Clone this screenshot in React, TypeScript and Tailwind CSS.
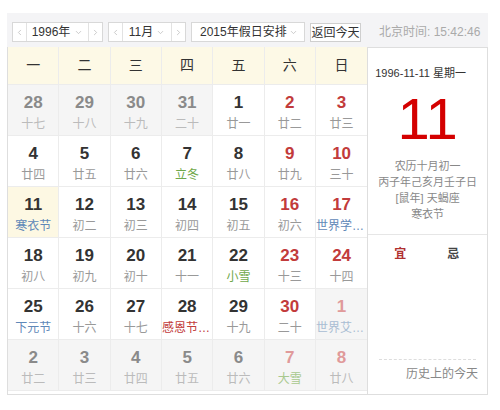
import React from 'react';
import { ChevronDown, ChevronLeft, ChevronRight } from 'lucide-react';

type Kind = 'prev' | 'cur' | 'next';
interface Day {
  d: number;
  l: string;
  kind: Kind;
  tone?: 'blue' | 'green' | 'red';
  today?: boolean;
}

const rows: Day[][] = [
  [
    { d: 28, l: '十七', kind: 'prev' },
    { d: 29, l: '十八', kind: 'prev' },
    { d: 30, l: '十九', kind: 'prev' },
    { d: 31, l: '二十', kind: 'prev' },
    { d: 1, l: '廿一', kind: 'cur' },
    { d: 2, l: '廿二', kind: 'cur' },
    { d: 3, l: '廿三', kind: 'cur' },
  ],
  [
    { d: 4, l: '廿四', kind: 'cur' },
    { d: 5, l: '廿五', kind: 'cur' },
    { d: 6, l: '廿六', kind: 'cur' },
    { d: 7, l: '立冬', kind: 'cur', tone: 'green' },
    { d: 8, l: '廿八', kind: 'cur' },
    { d: 9, l: '廿九', kind: 'cur' },
    { d: 10, l: '三十', kind: 'cur' },
  ],
  [
    { d: 11, l: '寒衣节', kind: 'cur', tone: 'blue', today: true },
    { d: 12, l: '初二', kind: 'cur' },
    { d: 13, l: '初三', kind: 'cur' },
    { d: 14, l: '初四', kind: 'cur' },
    { d: 15, l: '初五', kind: 'cur' },
    { d: 16, l: '初六', kind: 'cur' },
    { d: 17, l: '世界学生日', kind: 'cur', tone: 'blue' },
  ],
  [
    { d: 18, l: '初八', kind: 'cur' },
    { d: 19, l: '初九', kind: 'cur' },
    { d: 20, l: '初十', kind: 'cur' },
    { d: 21, l: '十一', kind: 'cur' },
    { d: 22, l: '小雪', kind: 'cur', tone: 'green' },
    { d: 23, l: '十三', kind: 'cur' },
    { d: 24, l: '十四', kind: 'cur' },
  ],
  [
    { d: 25, l: '下元节', kind: 'cur', tone: 'blue' },
    { d: 26, l: '十六', kind: 'cur' },
    { d: 27, l: '十七', kind: 'cur' },
    { d: 28, l: '感恩节(美国)', kind: 'cur', tone: 'red' },
    { d: 29, l: '十九', kind: 'cur' },
    { d: 30, l: '二十', kind: 'cur' },
    { d: 1, l: '世界艾滋病日', kind: 'next', tone: 'blue' },
  ],
  [
    { d: 2, l: '廿二', kind: 'next' },
    { d: 3, l: '廿三', kind: 'next' },
    { d: 4, l: '廿四', kind: 'next' },
    { d: 5, l: '廿五', kind: 'next' },
    { d: 6, l: '廿六', kind: 'next' },
    { d: 7, l: '大雪', kind: 'next', tone: 'green' },
    { d: 8, l: '廿八', kind: 'next' },
  ],
];

const weekNames = ['一', '二', '三', '四', '五', '六', '日'];

const DayCell: React.FC<{ day: Day; col: number }> = ({ day, col }) => {
  const weekend = col >= 5;
  const faded = day.kind !== 'cur';

  let bg = 'bg-white';
  if (day.today) bg = 'bg-[#fdf8e3]';
  else if (faded) bg = 'bg-[#f5f5f5]';

  let numColor = 'text-[#333]';
  if (faded) numColor = weekend ? 'text-[#e09a9a]' : 'text-[#8a8a8a]';
  else if (weekend) numColor = 'text-[#c23b3b]';

  let lunarColor = faded ? 'text-[#bbb]' : 'text-[#999]';
  if (day.tone === 'blue') lunarColor = faded ? 'text-[#a9bdd3]' : 'text-[#5f88b8]';
  if (day.tone === 'green') lunarColor = faded ? 'text-[#a9c98f]' : 'text-[#6fa84a]';
  if (day.tone === 'red') lunarColor = 'text-[#c23b3b]';

  return (
    <div
      className={`min-w-0 h-[51px] border-r border-b border-[#ececec] flex flex-col items-center pt-[8px] ${bg} ${
        col === 6 ? 'border-r-0' : ''
      }`}
    >
      <div className={`text-[17px] leading-[20px] font-bold ${numColor}`}>{day.d}</div>
      <div className={`w-full text-center overflow-hidden text-ellipsis whitespace-nowrap text-[12px] leading-[16px] mt-[3px] ${lunarColor}`}>
        {day.l}
      </div>
    </div>
  );
};

const App: React.FC = () => {
  return (
    <div className="w-[500px] h-[410px] bg-white pt-[13px] pl-[7px] font-['Liberation_Sans','Noto_Sans_CJK_SC',sans-serif]">
      <div className="w-[481px]">
        {/* top toolbar */}
        <div className="h-[34px] bg-[#f4f4f6] flex items-start pt-[9px] pl-[5px] gap-[5px] text-[12px] text-[#333]">
          <div className="w-[91px] h-[20px] flex border border-[#d8d8d8] bg-white">
            <span className="w-[14px] flex items-center justify-center border-r border-[#e2e2e2] text-[#bbb]">
              <ChevronLeft size={9} />
            </span>
            <span className="flex-1 flex items-center justify-center gap-[4px]">
              1996年
              <ChevronDown size={9} className="text-[#bbb]" />
            </span>
            <span className="w-[14px] flex items-center justify-center border-l border-[#e2e2e2] text-[#bbb]">
              <ChevronRight size={9} />
            </span>
          </div>
          <div className="w-[78px] h-[20px] flex border border-[#d8d8d8] bg-white">
            <span className="w-[14px] flex items-center justify-center border-r border-[#e2e2e2] text-[#bbb]">
              <ChevronLeft size={9} />
            </span>
            <span className="flex-1 flex items-center justify-center gap-[3px]">
              11月
              <ChevronDown size={9} className="text-[#bbb]" />
            </span>
            <span className="w-[14px] flex items-center justify-center border-l border-[#e2e2e2] text-[#bbb]">
              <ChevronRight size={9} />
            </span>
          </div>
          <div className="w-[114px] h-[20px] flex items-center justify-between pl-[8px] pr-[6px] border border-[#d8d8d8] bg-white">
            <span>2015年假日安排</span>
            <ChevronDown size={9} className="text-[#bbb]" />
          </div>
          <button className="w-[51px] h-[19px] mt-[1px] px-0 border border-[#cfcfcf] bg-white text-[12px] leading-none whitespace-nowrap text-[#333]">
            返回今天
          </button>
          <span className="ml-[13px] leading-[20px] text-[#aaa] whitespace-nowrap">北京时间: 15:42:46</span>
        </div>

        <div className="flex">
          {/* month grid */}
          <div className="w-[361px] border-l border-b border-[#dedede]">
            <div className="grid grid-cols-7 bg-[#fdf9e6]">
              {weekNames.map((w, i) => (
                <div
                  key={w}
                  className={`h-[38px] flex items-center justify-center text-[14px] text-[#333] border-b border-[#ececec] ${
                    i < 6 ? 'border-r' : ''
                  }`}
                >
                  {w}
                </div>
              ))}
            </div>
            {rows.map((r, ri) => (
              <div key={ri} className="grid grid-cols-7">
                {r.map((day, ci) => (
                  <DayCell key={ci} day={day} col={ci} />
                ))}
              </div>
            ))}
          </div>

          {/* detail panel */}
          <div className="w-[121px] h-[348px] border border-[#dedede] bg-white flex flex-col">
            <div className="h-[187px] border-b border-[#e6e6e6] flex flex-col items-center">
              <div className="self-start pl-[7px] pt-[18px] text-[11px] leading-[14px] text-[#333]">
                1996-11-11 星期一
              </div>
              <div className="mt-[10px] text-[58px] leading-[58px] text-[#d40000]">11</div>
              <div className="mt-[10px] text-[11px] leading-[16px] text-[#888] text-center">
                <div>农历十月初一</div>
                <div>丙子年己亥月壬子日</div>
                <div>[鼠年] 天蝎座</div>
                <div>寒衣节</div>
              </div>
            </div>
            <div className="flex pt-[10px] text-[12px] font-bold">
              <span className="ml-[26px] text-[#b03030]">宜</span>
              <span className="ml-[41px] text-[#444]">忌</span>
            </div>
            <div className="mt-auto mx-[11px] border-t border-dashed border-[#ddd] mb-[5px]" />
            <div className="self-end pr-[9px] pb-[11px] text-[12px] text-[#888]">历史上的今天</div>
          </div>
        </div>
      </div>
    </div>
  );
};

export default App;
